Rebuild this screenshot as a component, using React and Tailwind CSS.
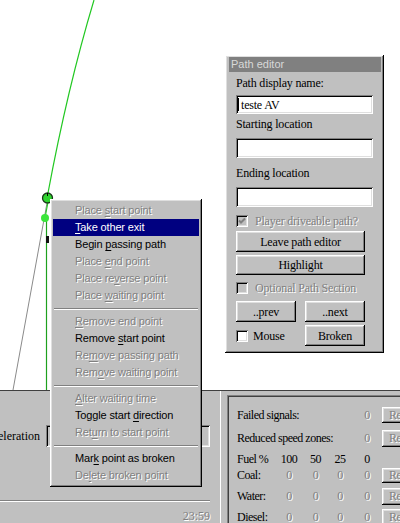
import React from "react";

// win95 bevels
const raised =
  "shadow-[inset_-1px_-1px_0_#000,inset_1px_1px_0_#fff,inset_-2px_-2px_0_#808080,inset_2px_2px_0_#dfdfdf]";
const sunken =
  "shadow-[inset_1px_1px_0_#808080,inset_-1px_-1px_0_#fff,inset_2px_2px_0_#000,inset_-2px_-2px_0_#dfdfdf]";
const dim = "text-[#808080] [text-shadow:1px_1px_0_#fff]";
const sans = "font-['Liberation_Sans',Arial,sans-serif]";

const menuGroups = [
  [
    { pre: "Place ", key: "s", post: "tart point", off: true },
    { pre: "", key: "T", post: "ake other exit", active: true },
    { pre: "Begin ", key: "p", post: "assing path" },
    { pre: "Place ", key: "e", post: "nd point", off: true },
    { pre: "Place re", key: "v", post: "erse point", off: true },
    { pre: "Place ", key: "w", post: "aiting point", off: true },
  ],
  [
    { pre: "", key: "R", post: "emove end point", off: true },
    { pre: "Remove ", key: "s", post: "tart point" },
    { pre: "Re", key: "m", post: "ove passing path", off: true },
    { pre: "Rem", key: "o", post: "ve waiting point", off: true },
  ],
  [
    { pre: "", key: "A", post: "lter waiting time", off: true },
    { pre: "Toggle start ", key: "d", post: "irection" },
    { pre: "Ret", key: "u", post: "rn to start point", off: true },
  ],
  [
    { pre: "Mar", key: "k", post: " point as broken" },
    { pre: "De", key: "l", post: "ete broken point", off: true },
  ],
];

const fuelRows = [
  { name: "Coal:", h: "h-[16px] mt-0", bh: "h-[15px]" },
  { name: "Water:", h: "h-[18px] mt-[4px]", bh: "h-[17px]" },
  { name: "Diesel:", h: "h-[18px] mt-[3px]", bh: "h-[17px]" },
];

function Btn({ children, className = "", off }) {
  return (
    <div
      className={`flex items-center justify-center bg-[#c0c0c0] ${raised} ${
        off ? dim : ""
      } ${className}`}
    >
      {children}
    </div>
  );
}

function Check({ checked, off }) {
  return (
    <span
      className={`relative block w-[12px] h-[12px] shrink-0 ${
        off ? "bg-[#c0c0c0]" : "bg-white"
      } ${sunken}`}
    >
      {checked && (
        <svg className="absolute inset-0" width="12" height="12" viewBox="0 0 12 12">
          <path d="M3 5.5 L5 7.5 L9 3.5" stroke={off ? "#808080" : "#000"} strokeWidth="2" fill="none" />
        </svg>
      )}
    </span>
  );
}

function Field({ children, className = "" }) {
  return (
    <div className={`w-[137px] bg-white ${sunken} flex items-center pl-[2px] ${className}`}>
      {children}
    </div>
  );
}

function PathEditor() {
  return (
    <div
      className={`absolute left-[225px] top-[55px] w-[159px] h-[298px] bg-[#c0c0c0] ${raised} pt-[2px] pl-[4px] pr-[3px]`}
    >
      <div className={`h-[15px] bg-[#808080] text-[#d8d8d8] ${sans} text-[11px] leading-[15px] pl-[2px]`}>
        Path editor
      </div>
      <div className="flex flex-col pl-[7px] tracking-[-0.2px]">
        <div className="h-[22px] flex items-center">Path display name:</div>
        <Field className="mt-[1px] h-[19px]">
          <span className="w-px h-[13px] bg-black mr-[2px]" />
          <span>teste AV</span>
        </Field>
        <div className="h-[20px] flex items-center">Starting location</div>
        <Field className="mt-[4px] h-[20px]" />
        <div className="h-[29px] flex items-center">Ending location</div>
        <Field className="h-[20px]" />
        <div className="mt-[8px] h-[12px] flex items-center gap-[7px]">
          <Check checked off />
          <span className={dim}>Player driveable path?</span>
        </div>
        <Btn className="mt-[4px] h-[21px] w-[129px]">Leave path editor</Btn>
        <Btn className="mt-[3px] h-[20px] w-[129px]">Highlight</Btn>
        <div className="mt-[7px] h-[12px] flex items-center gap-[7px]">
          <Check off />
          <span className={dim}>Optional Path Section</span>
        </div>
        <div className="mt-[7px] h-[21px] flex gap-[9px]">
          <Btn className="w-[60px]">..prev</Btn>
          <Btn className="w-[60px]">..next</Btn>
        </div>
        <div className="mt-[3px] h-[21px] flex items-center">
          <div className="w-[69px] flex items-center gap-[5px]">
            <Check />
            <span>Mouse</span>
          </div>
          <Btn className="w-[60px] h-[21px]">Broken</Btn>
        </div>
      </div>
    </div>
  );
}

function ContextMenu() {
  return (
    <div
      className={`absolute left-[50px] top-[199px] w-[152px] bg-[#c0c0c0] ${raised} p-[3px] ${sans} text-[11px] tracking-[-0.15px]`}
    >
      {menuGroups.map((group, gi) => (
        <div key={gi}>
          {gi > 0 && (
            <div className="h-[9px] flex items-center px-[1px]">
              <div className="w-full h-[2px] border-t border-[#808080] border-b border-b-white" />
            </div>
          )}
          {group.map((it, i) => (
            <div
              key={i}
              className={`h-[17px] flex items-center pl-[22px] ${
                it.active ? "bg-[#000080] text-white" : it.off ? dim : "text-black"
              }`}
            >
              <span className="whitespace-pre">
                {it.pre}
                <span className="underline underline-offset-[2px]">{it.key}</span>
                {it.post}
              </span>
            </div>
          ))}
        </div>
      ))}
    </div>
  );
}

function LeftPanel() {
  return (
    <div className="w-[220px] shrink-0 flex flex-col">
      <div className="mt-[34px] h-[22px] flex items-center">
        <div className="w-[40px] flex justify-end overflow-hidden">
          <span className="shrink-0 whitespace-nowrap">Acceleration</span>
        </div>
        <div className={`ml-[6px] w-[164px] h-[22px] ${sunken}`} />
      </div>
      <div className="mt-[53px] w-[210px] h-[2px] border-t border-[#808080] border-b border-b-white" />
      <div className={`mt-[6px] h-[16px] w-[210px] flex items-center justify-end ${dim}`}>23:59</div>
    </div>
  );
}

function RightPanel() {
  return (
    <div className="flex-1 min-w-0 border-l border-white pl-[6px] pt-[4px] tracking-[-0.5px]">
      <div className="h-full w-[200px] pl-[10px] shadow-[inset_1px_1px_0_#808080,inset_2px_2px_0_#404040]">
        <div className="pt-[11px]" />
        <div className="h-[18px] flex items-center">
          <span className="w-[119px] shrink-0 whitespace-nowrap">Failed signals:</span>
          <span className={`w-[22px] shrink-0 text-center ${dim}`}>0</span>
          <Btn off className="ml-[4px] w-[38px] shrink-0 h-[16px]">Reset</Btn>
        </div>
        <div className="mt-[5px] h-[18px] flex items-center">
          <span className="w-[119px] shrink-0 whitespace-nowrap">Reduced speed zones:</span>
          <span className={`w-[22px] shrink-0 text-center ${dim}`}>0</span>
          <Btn off className="ml-[4px] w-[38px] shrink-0 h-[17px]">Reset</Btn>
        </div>
        <div className="mt-[4px] h-[16px] flex items-center">
          <span className="w-[41px] shrink-0 whitespace-nowrap">Fuel %</span>
          <span className="w-[22px] shrink-0 text-center">100</span>
          <span className="ml-[4px] w-[23px] shrink-0 text-center">50</span>
          <span className="ml-[2px] w-[22px] shrink-0 text-center">25</span>
          <span className="ml-[5px] w-[22px] shrink-0 text-center">0</span>
        </div>
        {fuelRows.map((r) => (
          <div key={r.name} className={`${r.h} flex items-center`}>
            <span className="w-[41px] shrink-0 whitespace-nowrap">{r.name}</span>
            <span className={`w-[22px] shrink-0 text-center ${dim}`}>0</span>
            <span className={`ml-[4px] w-[23px] shrink-0 text-center ${dim}`}>0</span>
            <span className={`ml-[2px] w-[22px] shrink-0 text-center ${dim}`}>0</span>
            <span className={`ml-[5px] w-[22px] shrink-0 text-center ${dim}`}>0</span>
            <Btn off className={`ml-[4px] w-[38px] shrink-0 ${r.bh}`}>Reset</Btn>
          </div>
        ))}
      </div>
    </div>
  );
}

export default function App() {
  return (
    <div className="relative w-[400px] h-[523px] overflow-hidden bg-[#c0c0c0] font-['Liberation_Serif',serif] text-[12px] text-black">
      <div className="relative h-[390px] bg-white">
        <svg className="absolute inset-0" width="400" height="390">
          <path d="M94 0 Q67.4 88.6 48 193" stroke="#22c822" strokeWidth="1.2" fill="none" />
          <line x1="47" y1="203" x2="13" y2="390" stroke="#8a8a8a" strokeWidth="1" />
          <line x1="48" y1="202" x2="45" y2="218" stroke="#22c822" strokeWidth="1.2" />
          <line x1="46.5" y1="218" x2="46.5" y2="390" stroke="#1fa01f" strokeWidth="1.2" />
          <circle cx="47.5" cy="198" r="5" fill="#2fd52f" stroke="#1a3a1a" strokeWidth="1.3" />
          <rect x="47" y="193" width="1" height="3" fill="#000" />
          <circle cx="45" cy="218" r="4" fill="#3be63b" />
          <rect x="46" y="236" width="3" height="7" fill="#111" />
        </svg>
      </div>
      <div className="flex h-[133px] border-t border-[#404040]">
        <LeftPanel />
        <RightPanel />
      </div>
      <PathEditor />
      <ContextMenu />
    </div>
  );
}
